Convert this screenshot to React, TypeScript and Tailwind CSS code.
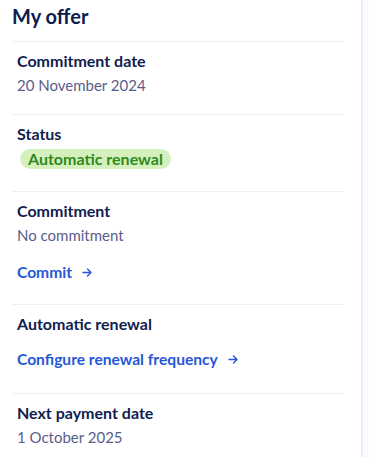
import type { ReactNode } from 'react';

function Arrow() {
  return (
    <svg width="10" height="9" viewBox="0 0 10 9" fill="none" stroke="currentColor" strokeWidth="1.4" strokeLinecap="round" strokeLinejoin="round">
      <path d="M1 4.5h8M5.5 1l3.5 3.5L5.5 8" />
    </svg>
  );
}

function Row({ label, children, className }: { label: string; children: ReactNode; className: string }) {
  return (
    <div className={`pl-[5px] pt-[7px] ${className}`}>
      <p className="text-[16px] font-bold text-[#10204f] leading-[23px]">{label}</p>
      {children}
    </div>
  );
}

function Value({ text }: { text: string }) {
  return <p className="mt-[1px] text-[15px] text-[#5a5d8c] leading-[24px]">{text}</p>;
}

function LinkBtn({ text }: { text: string }) {
  return (
    <a className="flex items-center gap-[10px] text-[15.6px] font-bold text-[#2458d6] leading-[24px] cursor-pointer">
      {text}
      <Arrow />
    </a>
  );
}

export default function App() {
  return (
    <div className="flex w-[369px] h-[457px] bg-white overflow-hidden" style={{ fontFamily: 'Lato, "Noto Sans", sans-serif' }}>
      <div className="w-[361px] pl-3 pr-[17px] pt-[2px]">
        <h2 className="text-[20px] font-bold text-[#0c1c4f] leading-[28px] pb-[11px] border-b border-[#efeff2]">My offer</h2>

        <Row label="Commitment date" className="pb-[17px] border-b border-[#efeff2]">
          <Value text="20 November 2024" />
        </Row>

        <Row label="Status" className="pb-[22px] border-b border-[#efeff2]">
          <div className="mt-[4px] ml-[3px] flex w-fit h-[20px] items-center rounded-full bg-[#d6f0bd] px-[8px] text-[16px] font-bold text-[#2e8a1c] leading-[20px]">
            Automatic renewal
          </div>
        </Row>

        <Row label="Commitment" className="pb-[20px] border-b border-[#efeff2]">
          <Value text="No commitment" />
          <div className="mt-[13px]">
            <LinkBtn text="Commit" />
          </div>
        </Row>

        <Row label="Automatic renewal" className="pb-[22px] border-b border-[#efeff2]">
          <div className="mt-[12px]">
            <LinkBtn text="Configure renewal frequency" />
          </div>
        </Row>

        <Row label="Next payment date" className="pb-[12px]">
          <Value text="1 October 2025" />
        </Row>
      </div>
      <div className="w-[2px] bg-[#ebeaf8]" />
      <div className="flex-1 bg-[#fcfcff]" />
    </div>
  );
}
